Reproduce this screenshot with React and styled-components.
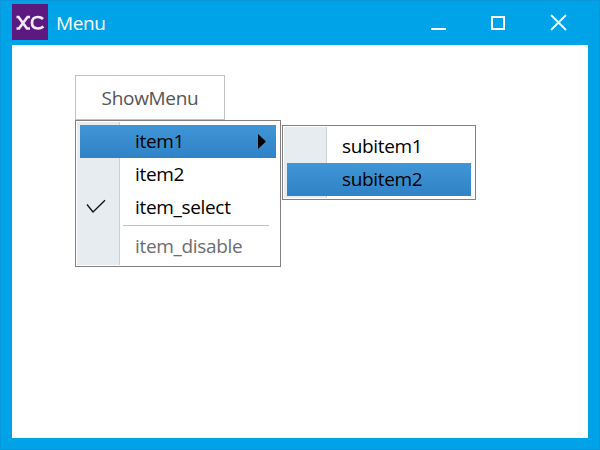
import React from 'react';
import styled, { createGlobalStyle } from 'styled-components';

const GlobalStyle = createGlobalStyle`
  * { box-sizing: border-box; }
  body {
    margin: 0;
    font-family: "Open Sans", "Noto Sans", sans-serif;
    font-size: 19px;
    color: #000;
  }
`;

const Window = styled.div`
  display: flex;
  flex-direction: column;
  width: 600px;
  height: 450px;
  padding: 0 11px 11px;
  border: 1px solid #0b97dc;
  background: #00a2e8;
`;

const TitleBar = styled.header`
  display: flex;
  align-items: center;
  flex: 0 0 44px;
  padding-bottom: 1px;
`;

const Logo = styled.svg`
  display: block;
  width: 36px;
  height: 36px;
  margin-bottom: 1px;
`;

const Title = styled.h1`
  flex: 1;
  margin: 0 0 0 8px;
  font-size: 19px;
  font-weight: 400;
  line-height: 26px;
  letter-spacing: -0.4px;
  color: #fff;
`;

const Controls = styled.div`
  display: flex;
`;

const ControlButton = styled.button`
  width: 60px;
  height: 43px;
  padding: 0;
  border: 0;
  background: transparent;

  svg {
    display: block;
    width: 60px;
    height: 43px;
  }
`;

const Client = styled.main`
  position: relative;
  flex: 1;
  padding: 30px 63px;
  background: #fff;
`;

const MenuButton = styled.button`
  display: block;
  width: 150px;
  height: 45px;
  padding: 0;
  border: 1px solid #c3c3c3;
  background: #fff;
  color: #555;
  font: inherit;
  line-height: 26px;
  letter-spacing: -0.3px;
`;

const Popup = styled.div`
  position: absolute;
  left: ${({ $left }) => $left}px;
  top: ${({ $top }) => $top}px;
  width: ${({ $width }) => $width}px;
  padding: 1px;
  border: 1px solid #858080;
  background: #fff;
`;

const PopupBody = styled.div`
  padding: 3px 3px 2px;
  background: linear-gradient(90deg, #e6ecef 0 42px, #cdd1d3 42px 43px, #fff 43px);
`;

const MenuItem = styled.div`
  display: grid;
  grid-template-columns: 55px 1fr 19px;
  align-items: center;
  height: 33px;
  line-height: 33px;
  white-space: nowrap;
  letter-spacing: -0.33px;
  color: ${({ $disabled }) => ($disabled ? '#6d6d6d' : '#000')};
  background: ${({ $active }) => ($active ? 'linear-gradient(#4096d6, #3082c6)' : 'transparent')};
`;

const Mark = styled.svg`
  display: block;
  width: 32px;
  height: 33px;
`;

const Arrow = styled.svg`
  display: block;
  width: 19px;
  height: 33px;
`;

const Separator = styled.div`
  height: 6px;
  margin: 0 7px 0 43px;
  padding-top: 1px;

  &::before {
    content: "";
    display: block;
    height: 1px;
    background: #c0c0c0;
  }
`;

export default function App() {
  return (
    <>
      <GlobalStyle />
      <Window>
        <TitleBar>
          <Logo viewBox="0 0 36 36">
            <rect width="36" height="36" fill="#5c1a80" />
            <g fill="none" stroke="#f3e9f6" strokeWidth="2.7">
              <path d="M4.500 13h2l8.500 11.500h3M18 13h-2.500L7 24.500H4.500" />
              <path d="M31 15Q29 13 26 13Q20 13 20 18.800Q20 24.500 26 24.500Q29 24.500 31.500 22.500" />
            </g>
          </Logo>
          <Title>Menu</Title>
          <Controls>
            <ControlButton aria-label="Minimize">
              <svg viewBox="0 0 60 43"><path d="M23 28h15" stroke="#fff" strokeWidth="2" /></svg>
            </ControlButton>
            <ControlButton aria-label="Maximize">
              <svg viewBox="0 0 60 43"><path d="M24 16h12v12H24z" fill="none" stroke="#fff" strokeWidth="2" /></svg>
            </ControlButton>
            <ControlButton aria-label="Close">
              <svg viewBox="0 0 60 43"><path d="M23 14l15 15M38 14L23 29" stroke="#fff" strokeWidth="1.8" /></svg>
            </ControlButton>
          </Controls>
        </TitleBar>
        <Client>
          <MenuButton>ShowMenu</MenuButton>
          <Popup role="menu" $left={63} $top={75} $width={206}>
            <PopupBody>
              <MenuItem role="menuitem" $active>
                <span />
                <span>item1</span>
                <Arrow viewBox="0 0 19 33"><path d="M1 9v15l8-7.500z" fill="#000" /></Arrow>
              </MenuItem>
              <MenuItem role="menuitem">
                <span />
                <span>item2</span>
              </MenuItem>
              <MenuItem role="menuitem">
                <Mark viewBox="0 0 32 33"><path d="M7 13.500l6 7.500L25 9.200" fill="none" stroke="#111" strokeWidth="1.300" /></Mark>
                <span>item_select</span>
              </MenuItem>
              <Separator />
              <MenuItem role="menuitem" $disabled>
                <span />
                <span>item_disable</span>
              </MenuItem>
            </PopupBody>
          </Popup>
          <Popup role="menu" $left={270} $top={80} $width={194}>
            <PopupBody>
              <MenuItem role="menuitem">
                <span />
                <span>subitem1</span>
              </MenuItem>
              <MenuItem role="menuitem" $active>
                <span />
                <span>subitem2</span>
              </MenuItem>
            </PopupBody>
          </Popup>
        </Client>
      </Window>
    </>
  );
}
